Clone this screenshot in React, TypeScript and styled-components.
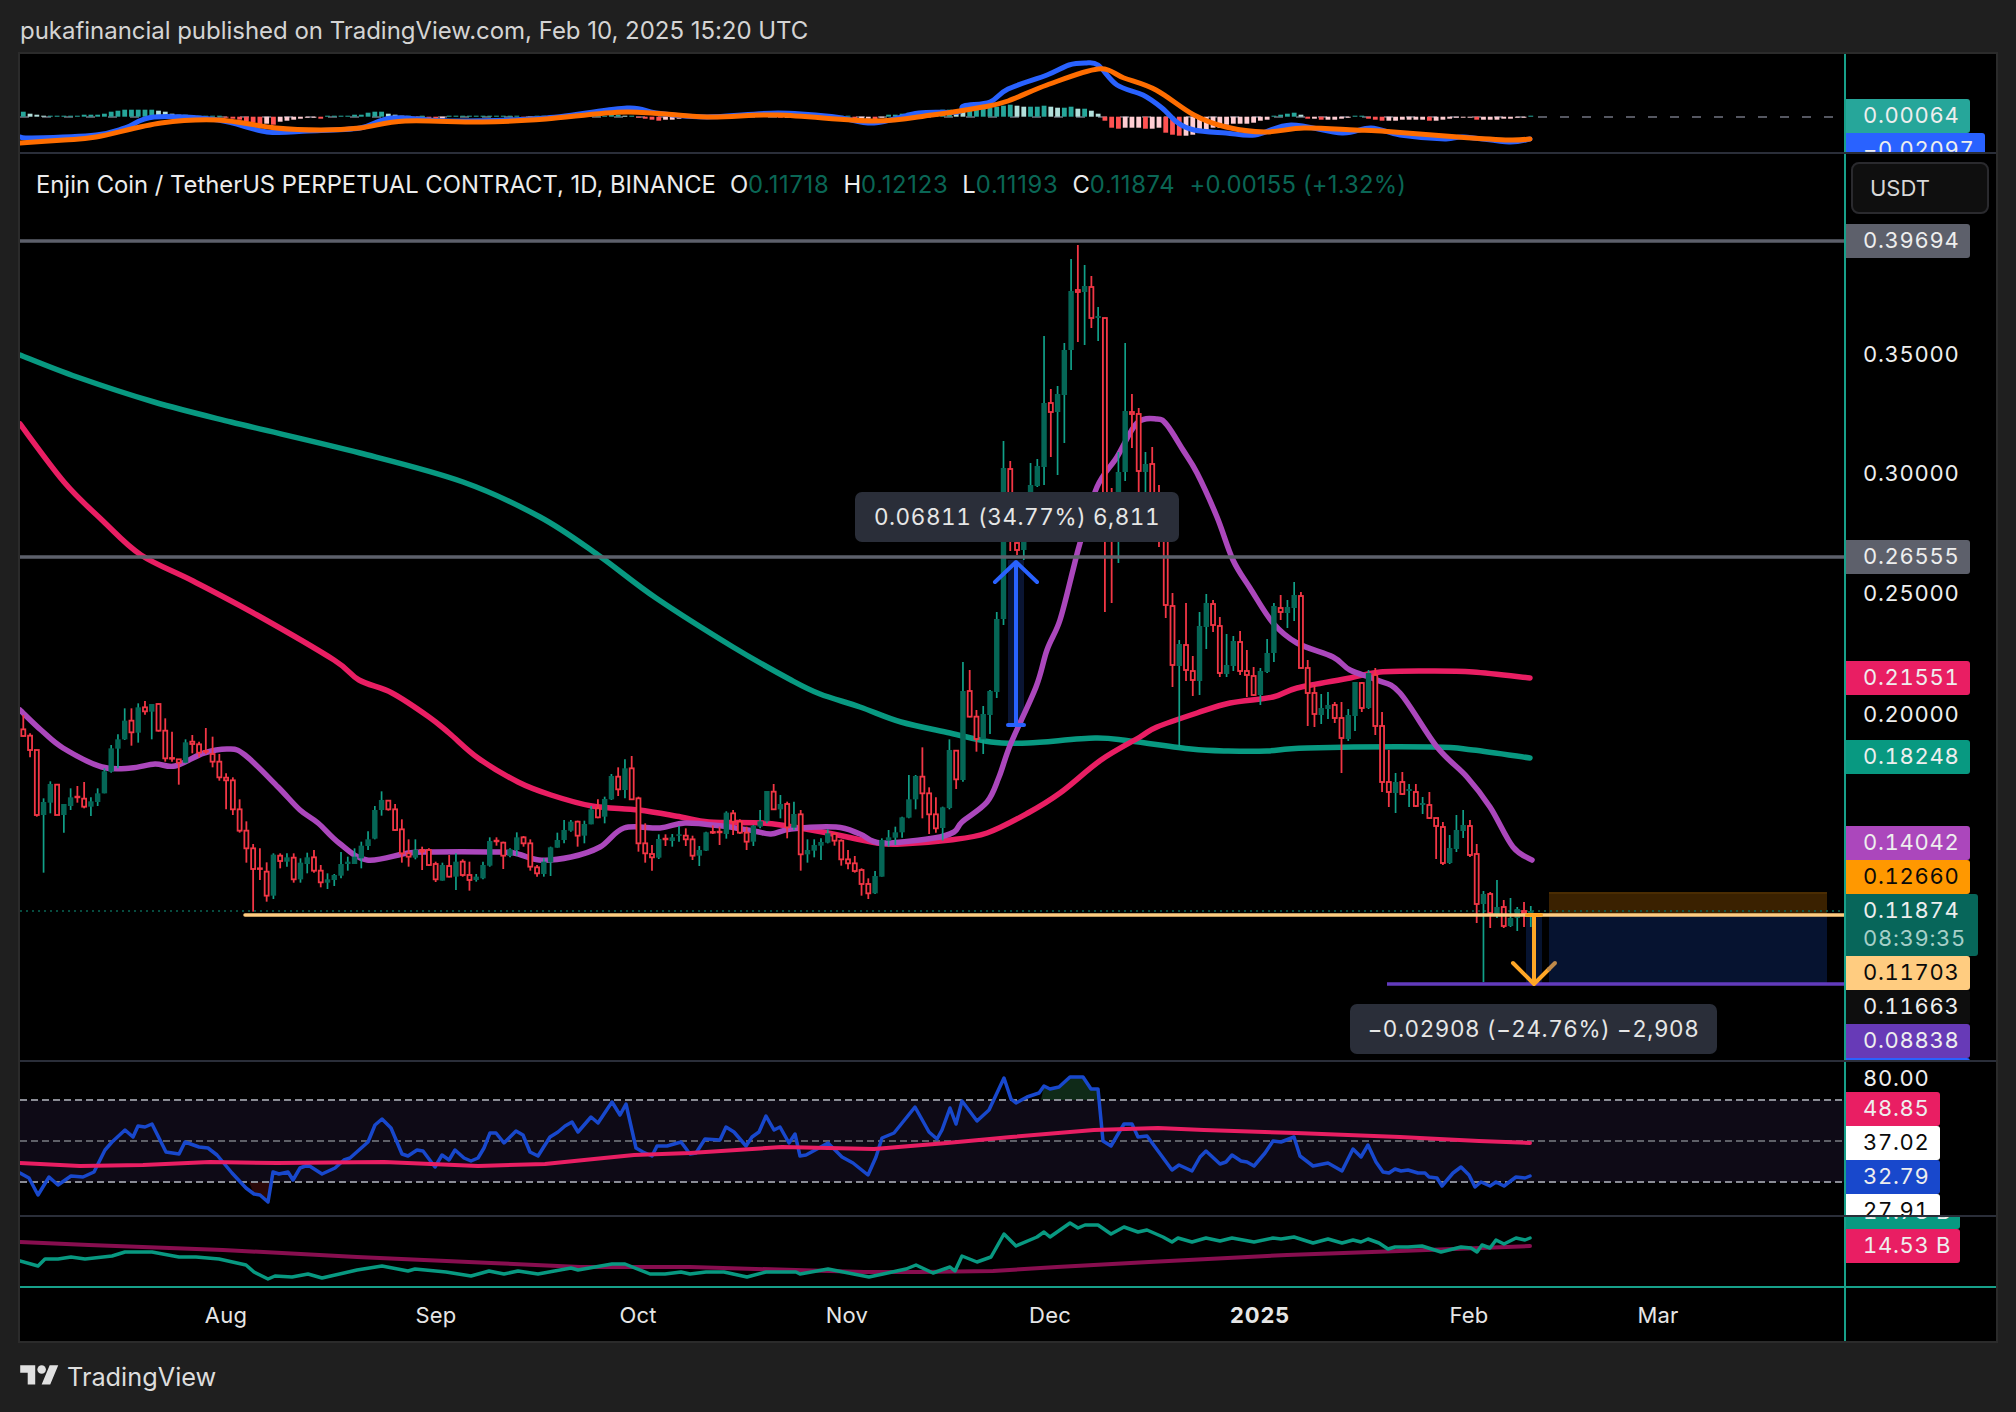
import React from 'react';
import styled, { createGlobalStyle } from 'styled-components';

const GlobalStyle = createGlobalStyle`
  html, body {
    margin: 0;
    padding: 0;
    background: #1f1f1f;
    font-family: Inter, "Liberation Sans", sans-serif;
  }
`;

const Page = styled.div`
  width: 2016px;
  height: 1412px;
  overflow: hidden;
  background: #1f1f1f;
`;

const Header = styled.div`
  height: 52px;
  padding-left: 20px;
  padding-top: 16px;
  box-sizing: border-box;
  color: #d4d4d4;
  font-size: 24px;
  line-height: 30px;
  letter-spacing: -0.03px;
`;

const ChartFrame = styled.div`
  width: 1976px;
  margin-left: 18px;
  border: 2px solid #2b2b2b;
  background: #000;
`;

const Pane = styled.div<{ $h: number; $line?: boolean }>`
  display: grid;
  grid-template-columns: 1824px 152px;
  grid-template-rows: ${(p) => p.$h}px;
  height: ${(p) => p.$h}px;
  border-bottom: ${(p) => (p.$line ? '2px solid #2a2e39' : 'none')};
  position: relative;
  overflow: hidden;
`;

const Plot = styled.svg`
  display: block;
  width: 1824px;
  height: 100%;
`;

const Axis = styled.div`
  position: relative;
  display: flex;
  flex-direction: column;
  border-left: 2px solid #17a08a;
  overflow: hidden;
`;

const PriceStack = styled.div<{ $offset: number }>`
  display: flex;
  flex-direction: column;
  flex-shrink: 0;
  margin-top: ${(p) => p.$offset}px;
`;

const PriceTag = styled.div<{ $bg?: string; $fg?: string; $w?: number; $h?: number }>`
  flex-shrink: 0;
  width: ${(p) => p.$w ?? 124}px;
  height: ${(p) => p.$h ?? 34}px;
  box-sizing: border-box;
  padding-left: 17px;
  border-radius: 0 3px 3px 0;
  background: ${(p) => p.$bg ?? 'transparent'};
  color: ${(p) => p.$fg ?? '#eeeeee'};
  font-size: 22px;
  line-height: 32px;
  letter-spacing: 0.7px;
  font-variant-numeric: tabular-nums;
  white-space: nowrap;
`;

// a level on the price scale, pinned at the height of its price
const ScaleTag = styled(PriceTag)<{ $top: number }>`
  position: absolute;
  left: 0;
  top: ${(p) => p.$top}px;
`;

const CountDown = styled.div`
  color: #a6cfc8;
  margin-top: -4px;
`;

const CurrencyButton = styled.div`
  flex-shrink: 0;
  width: 138px;
  height: 52px;
  margin: 8px 0 0 5px;
  box-sizing: border-box;
  padding-left: 17px;
  background: #0f0f0f;
  border: 2px solid #2a2a2e;
  border-radius: 8px;
  color: #d8d8d8;
  font-size: 22px;
  line-height: 48px;
`;

const Legend = styled.div`
  position: absolute;
  left: 16px;
  top: 16px;
  display: flex;
  gap: 14px;
  color: #ececec;
  font-size: 23.8px;
  line-height: 30px;
  white-space: nowrap;
`;

const LegendValue = styled.span`
  color: #0a6655;
  letter-spacing: 0.7px;
`;

const LegendChange = styled.span`
  color: #0a6655;
  letter-spacing: 0.2px;
`;

const Measure = styled.div<{ $left: number; $top: number; $w: number }>`
  position: absolute;
  left: ${(p) => p.$left}px;
  top: ${(p) => p.$top}px;
  width: ${(p) => p.$w}px;
  height: 50px;
  background: #2a2e39;
  border-radius: 7px;
  color: #e6e6e6;
  font-size: 22.5px;
  font-variant-numeric: tabular-nums;
  letter-spacing: 0.55px;
  line-height: 50px;
  text-align: center;
  white-space: nowrap;
`;

const TimeRow = styled.div`
  display: grid;
  grid-template-columns: 1824px 152px;
  height: 53px;
  border-top: 2px solid #17a08a;
`;

const TimeScale = styled.div`
  display: flex;
  align-items: center;
  padding-left: 101px;
`;

const TimeTick = styled.span<{ $w: number; $bold?: boolean }>`
  width: ${(p) => p.$w}px;
  text-align: center;
  color: #e6e6e6;
  font-size: 22px;
  line-height: 30px;
  font-weight: ${(p) => (p.$bold ? 700 : 400)};
  letter-spacing: ${(p) => (p.$bold ? '0.8px' : '0.2px')};
`;

const Footer = styled.div`
  display: flex;
  align-items: center;
  gap: 8px;
  height: 40px;
  margin-top: 13px;
  padding-left: 20px;
  color: #dddddd;
  font-size: 25.3px;
`;

// green?, body top, body bottom, wick top, wick bottom
type Candle = [number, number, number, number, number];

// read from the chart at 3 units per px, measured down from y=680
const firstHalf: Candle[] = [
  [0, 148, 168, 105, 170], [0, 167, 210, 160, 232], [0, 210, 405, 210, 410], [1, 366, 405, 355, 578],
  [1, 312, 368, 304, 400], [0, 314, 405, 314, 405], [1, 372, 405, 372, 458], [1, 352, 378, 325, 390],
  [0, 350, 352, 318, 368], [0, 356, 380, 306, 385], [1, 364, 380, 352, 408], [1, 340, 366, 325, 378],
  [1, 274, 340, 265, 340], [1, 205, 275, 195, 278], [1, 178, 206, 163, 265], [1, 122, 178, 85, 180],
  [0, 122, 157, 85, 197], [1, 82, 158, 70, 188], [0, 82, 94, 63, 104], [1, 72, 95, 72, 178],
  [0, 72, 152, 70, 155], [0, 152, 235, 115, 245], [0, 234, 236, 155, 245], [0, 238, 248, 238, 314],
  [1, 187, 248, 178, 250], [0, 185, 192, 165, 220], [0, 193, 218, 185, 232], [0, 213, 215, 144, 222],
  [0, 222, 245, 170, 262], [0, 245, 292, 222, 302], [0, 293, 301, 280, 388], [0, 301, 388, 292, 405],
  [0, 388, 452, 358, 458], [0, 452, 505, 424, 548], [0, 505, 567, 492, 695], [0, 565, 567, 505, 600],
  [0, 575, 647, 547, 665], [1, 524, 647, 520, 657], [0, 527, 543, 520, 565], [1, 532, 545, 520, 560],
  [0, 533, 598, 520, 608], [1, 548, 598, 535, 608], [1, 532, 552, 518, 580], [0, 532, 572, 510, 578],
  [0, 572, 607, 555, 622], [1, 598, 608, 580, 627], [1, 585, 600, 582, 618], [1, 552, 587, 516, 595],
  [1, 545, 552, 530, 572], [1, 530, 552, 505, 552], [1, 497, 535, 485, 565], [1, 478, 498, 454, 510],
  [1, 390, 476, 378, 478], [1, 360, 390, 334, 407], [0, 362, 388, 360, 392], [0, 388, 450, 372, 452],
  [0, 448, 520, 418, 548], [0, 520, 530, 478, 560], [1, 510, 533, 478, 538], [0, 510, 515, 500, 570],
  [0, 510, 555, 505, 558], [0, 552, 598, 545, 606], [1, 555, 602, 548, 602], [0, 558, 590, 525, 592],
  [1, 545, 590, 520, 630], [0, 545, 585, 538, 590], [0, 585, 600, 545, 632], [1, 590, 600, 582, 605],
  [1, 555, 595, 545, 598], [1, 483, 557, 472, 560], [0, 482, 484, 472, 497], [0, 488, 527, 485, 567],
  [1, 508, 528, 505, 532], [1, 472, 510, 457, 527], [0, 472, 490, 468, 500], [0, 490, 560, 478, 572],
  [0, 562, 580, 555, 590], [1, 545, 582, 535, 590], [1, 502, 547, 500, 588], [1, 480, 503, 458, 503],
  [1, 450, 480, 420, 490], [1, 425, 452, 420, 455], [0, 425, 467, 422, 500], [1, 432, 467, 422, 490],
  [1, 388, 433, 378, 433], [0, 385, 412, 358, 415], [1, 357, 410, 350, 430], [1, 288, 358, 282, 360],
  [0, 290, 328, 262, 348], [1, 265, 330, 238, 355], [0, 265, 358, 228, 360], [0, 355, 490, 350, 515],
  [0, 490, 520, 430, 548], [0, 522, 532, 495, 572], [1, 477, 533, 463, 537], [0, 476, 478, 463, 498],
  [1, 472, 483, 462, 500], [1, 463, 466, 438, 485], [0, 467, 478, 445, 498], [0, 478, 527, 467, 540],
  [1, 510, 527, 498, 558], [1, 457, 512, 455, 513], [0, 456, 458, 436, 462], [0, 455, 457, 440, 495],
  [1, 398, 462, 394, 476], [0, 400, 425, 390, 465], [0, 425, 458, 418, 462], [0, 458, 485, 440, 510],
  [1, 437, 485, 435, 498], [1, 424, 440, 390, 445], [1, 333, 424, 333, 430], [0, 335, 388, 312, 390],
  [1, 372, 388, 345, 415], [0, 372, 442, 365, 475], [1, 402, 443, 365, 450], [0, 403, 523, 390, 572],
  [1, 510, 523, 478, 548], [1, 495, 512, 478, 532], [1, 486, 497, 475, 540], [1, 460, 488, 448, 490],
  [0, 462, 482, 458, 497], [0, 482, 538, 478, 557], [0, 538, 550, 510, 568], [0, 550, 573, 528, 578],
  [0, 570, 612, 565, 647], [0, 612, 640, 595, 657], [1, 588, 640, 573, 642], [1, 480, 590, 475, 590],
  [1, 472, 482, 450, 500], [1, 457, 473, 440, 495], [1, 412, 457, 410, 473], [1, 358, 413, 285, 415],
  [1, 288, 358, 285, 388], [0, 290, 340, 202, 415], [0, 340, 403, 322, 462], [0, 403, 445, 352, 458],
  [1, 382, 444, 380, 482], [1, 210, 384, 178, 388], [0, 212, 298, 212, 327], [1, 33, 300, -54, 305],
  [0, 33, 110, -30, 112], [0, 110, 177, 90, 215], [1, 102, 178, 78, 222], [1, 33, 105, 30, 162],
];

// same order, plain page px
const secondHalf: Candle[] = [
  [1, 619, 692, 612, 698], [1, 468, 619, 441, 625], [0, 469, 540, 461, 551], [0, 543, 550, 520, 555],
  [1, 515, 550, 505, 560], [1, 485, 515, 463, 520], [1, 466, 486, 459, 487], [1, 403, 467, 336, 485],
  [0, 403, 412, 389, 457], [1, 394, 412, 386, 475], [1, 350, 395, 343, 443], [1, 291, 350, 259, 370],
  [0, 290, 292, 245, 342], [1, 286, 292, 265, 345], [0, 287, 318, 276, 328], [1, 316, 318, 307, 341],
  [0, 318, 517, 318, 612], [0, 500, 530, 488, 603], [1, 472, 495, 452, 563], [1, 411, 472, 343, 481],
  [0, 412, 414, 394, 448], [0, 414, 471, 408, 493], [1, 464, 472, 452, 493], [0, 464, 497, 447, 497],
  [0, 497, 540, 485, 547], [0, 540, 605, 530, 618], [0, 606, 665, 593, 687], [1, 644, 666, 640, 747],
  [0, 645, 670, 603, 681], [0, 671, 680, 656, 696], [1, 626, 681, 612, 695], [1, 603, 627, 594, 649],
  [0, 604, 625, 600, 632], [0, 626, 673, 617, 677], [1, 665, 674, 634, 677], [1, 641, 666, 636, 671],
  [0, 642, 671, 631, 675], [0, 671, 675, 650, 697], [0, 676, 695, 667, 696], [1, 671, 695, 668, 705],
  [1, 653, 672, 639, 673], [1, 606, 653, 603, 662], [0, 608, 612, 595, 620], [1, 607, 613, 600, 628],
  [1, 595, 608, 582, 621], [0, 596, 668, 592, 668], [0, 668, 693, 660, 726], [0, 693, 714, 685, 727],
  [1, 708, 715, 694, 724], [1, 705, 709, 692, 719], [0, 705, 718, 702, 723], [0, 718, 738, 702, 773],
  [1, 715, 739, 709, 741], [1, 682, 716, 682, 731], [0, 683, 708, 682, 712], [1, 673, 708, 670, 709],
  [0, 675, 726, 668, 735], [0, 726, 782, 712, 792], [0, 782, 792, 750, 807], [1, 782, 793, 773, 813],
  [0, 782, 794, 772, 795], [1, 789, 791, 784, 807], [0, 792, 806, 784, 807], [1, 803, 805, 797, 814],
  [0, 805, 818, 792, 819], [0, 818, 826, 818, 859], [0, 827, 863, 822, 865], [1, 848, 863, 835, 864],
  [1, 830, 849, 815, 852], [1, 825, 831, 810, 838], [0, 826, 855, 820, 857], [0, 854, 904, 844, 923],
  [1, 894, 904, 891, 982], [0, 894, 913, 892, 928], [1, 907, 914, 880, 918], [0, 907, 926, 900, 928],
  [1, 918, 926, 898, 927], [1, 909, 918, 907, 931], [0, 911, 913, 902, 927], [1, 911, 913, 906, 927],
];

const candles: Candle[] = [
  ...firstHalf.map(([g, a, b, c, d]): Candle => [g, 680 + a / 3, 680 + b / 3, 680 + c / 3, 680 + d / 3]),
  ...secondHalf,
];

const barX = (i: number) => 23.3 + 6.76 * i;

const macdBars = [
  5, 3, 2, 1, 1, 1, 1, 1, 1, 2, 2, 2, 3, 5, 6, 7, 7, 7, 7, 7, 6, 5, 3, 2, 2, 1, 1, 1, 1, 1,
  -1, -2, -3, -5, -6, -8, -7, -8, -5, -4, -3, -2, -1, -1, -2, 1, 1, 1, 1, 2, 2, 4, 5, 5, 3, 2,
  1, 1, -1, 1, -2, -3, -2, 1, 1, 1, 1, 1, 1, 1, 1, 1, 1, 1, -1, -1, 1, 1, 1, 1, 2, 1, 1, 1, 1, 1,
  1, 2, 2, 1, 1, -1, -2, -3, -4, -3, -3, -2, -1, 1, 1, 1, 1, 1, -1, 1, 1, 1, 1, 1, 1, 1, -1, -1, -1, -1,
  1, 1, 1, 1, 1, 1, 1, -2, -2, -2, -3, -1, 2, 2, 3, 4, 4, 5, 5, 6, 7, 7, 6, 5, 6, 7, 8, 9, 10,
  11, 12, 11, 10, 10, 10, 11, 10, 9, 9, 10, 8, 8, 6, 3,
  -4, -11, -12, -11, -11, -11, -12, -12, -11, -16, -18, -19, -19, -18, -15, -13, -11, -11, -8, -7, -7, -7, -6, -4, -3,
  1, 2, 3, 4, 2,
  -2, -2, -3, -3, -3, -2, -1, 1, 1, -2, -3, -4, -4, -4, -3, -3, -3, -3, -4, -4, -3, -2, -1, -1, -1, -3, -3, -3, -3, -2, -2, -1, -1, 1,
];

const barColor = (v: number, prev: number) => {
  if (v >= 0) return v >= prev ? '#26a69a' : '#b2dfdb';
  return v < prev ? '#ff5252' : '#ffcdd2';
};

const macdBlue =
  '20,137 32,138 96,135 125,128 154,117 218,120 267,132 308,131 360,128 392,118 450,121 546,118 627,108 656,113 707,117 778,113 835,117 874,123 919,113 958,112 964,106 990,102 1008,89 1047,75 1069,65 1085,63 1098,65 1117,85 1143,95 1162,108 1178,123 1194,130 1226,133 1255,135 1291,125 1342,133 1371,128 1400,135 1445,139 1464,137 1509,142 1530,139';
const macdOrange =
  '20,143 64,140 96,137 161,123 218,120 276,128 321,130 360,128 405,121 482,122 546,119 627,112 707,117 778,115 874,121 932,115 983,107 1008,101 1047,85 1098,69 1124,78 1156,90 1194,115 1226,127 1265,132 1304,128 1355,130 1381,131 1458,137 1509,140 1530,139';

const ema200 =
  '20,355 77,377 154,402 231,422 360,453 463,482 540,517 598,555 656,598 733,647 791,680 820,694 860,707 901,722 950,733 991,742 1028,743 1095,738 1130,741 1191,749 1228,751 1267,751 1307,748 1433,747 1473,750 1530,758';
const ema100 =
  '20,424 64,482 103,521 141,555 193,581 257,615 334,660 359,680 392,693 429,717 449,733 478,758 518,782 551,795 592,806 639,810 681,817 709,822 762,823 787,826 828,833 877,843 901,844 950,840 987,833 1028,813 1060,793 1101,760 1140,737 1157,727 1197,713 1230,703 1273,697 1297,688 1350,678 1380,672 1427,671 1473,672 1530,678';
const ema20 =
  '20,710 41,730 63,748 102,767 131,768 155,764 175,766 204,753 229,749 245,755 278,787 300,810 318,823 339,843 367,860 408,853 433,852 490,852 514,853 539,860 571,857 600,847 624,828 660,828 685,823 722,826 754,831 771,834 791,829 836,827 860,834 881,843 934,838 954,832 962,822 987,802 999,777 1011,743 1036,687 1047,650 1060,620 1073,570 1080,543 1097,487 1117,457 1137,423 1157,419 1167,425 1183,450 1197,473 1217,517 1233,560 1250,588 1273,623 1297,643 1333,657 1350,670 1377,680 1400,693 1437,747 1467,777 1490,807 1513,847 1532,860';

const rsiLine =
  '20,1173 29,1178 38,1195 49,1177 58,1185 71,1176 83,1177 94,1172 105,1150 112,1142 125,1130 133,1137 138,1126 145,1127 152,1124 161,1142 166,1152 179,1154 185,1142 199,1147 208,1148 217,1155 232,1173 246,1188 254,1194 260,1195 268,1202 273,1172 279,1174 288,1172 293,1180 300,1168 308,1165 322,1174 335,1168 344,1160 350,1158 368,1142 375,1125 382,1119 391,1128 402,1154 408,1156 417,1150 423,1151 435,1167 442,1155 449,1160 455,1150 464,1158 471,1161 478,1158 484,1148 490,1133 496,1133 504,1143 516,1131 523,1135 530,1152 538,1156 550,1137 558,1132 565,1126 572,1122 578,1132 591,1117 598,1123 612,1102 620,1115 626,1104 636,1148 643,1152 652,1156 657,1146 667,1146 681,1142 690,1154 696,1153 705,1139 720,1140 726,1127 734,1132 746,1146 752,1137 759,1132 766,1116 774,1130 780,1127 789,1143 795,1134 800,1156 806,1155 828,1143 842,1157 853,1163 868,1175 876,1157 882,1138 894,1133 915,1107 929,1132 937,1139 942,1130 950,1108 956,1124 962,1101 977,1121 989,1110 1004,1078 1011,1099 1016,1103 1027,1097 1039,1093 1044,1086 1050,1089 1059,1087 1070,1077 1083,1077 1091,1089 1098,1089 1103,1141 1111,1146 1124,1124 1132,1124 1138,1137 1147,1136 1172,1170 1179,1165 1192,1171 1200,1157 1206,1151 1220,1164 1226,1162 1232,1155 1241,1161 1247,1162 1254,1166 1265,1153 1273,1141 1281,1142 1294,1137 1300,1156 1313,1166 1328,1163 1342,1171 1353,1149 1361,1157 1368,1145 1376,1162 1383,1172 1389,1173 1395,1169 1401,1171 1408,1170 1418,1173 1425,1173 1429,1177 1437,1178 1442,1186 1453,1173 1461,1167 1469,1175 1475,1187 1481,1182 1490,1186 1496,1182 1504,1186 1516,1177 1525,1178 1530,1176';
const rsiAverage =
  '20,1163 80,1166 143,1165 210,1162 277,1163 384,1162 478,1166 545,1164 594,1159 634,1155 690,1153 782,1147 874,1149 947,1143 1011,1137 1094,1130 1158,1128 1204,1130 1296,1133 1400,1137 1479,1141 1530,1143';

const flowLine =
  '20,1261 38,1266 45,1259 58,1259 71,1257 85,1259 112,1256 125,1252 152,1252 179,1257 196,1257 219,1259 246,1265 254,1272 268,1279 275,1276 292,1277 308,1274 322,1278 357,1270 382,1266 408,1271 415,1269 446,1272 471,1276 489,1271 504,1274 518,1271 538,1274 571,1268 578,1270 612,1264 625,1264 650,1274 665,1274 681,1272 690,1274 706,1272 724,1272 747,1277 766,1272 796,1272 800,1274 828,1269 869,1277 906,1269 916,1265 933,1273 950,1267 955,1271 962,1256 977,1262 991,1257 1004,1234 1016,1246 1037,1237 1044,1232 1050,1237 1070,1223 1078,1228 1085,1225 1098,1225 1111,1234 1124,1227 1138,1232 1147,1230 1163,1237 1172,1242 1178,1238 1192,1242 1206,1238 1220,1241 1232,1238 1254,1242 1273,1238 1281,1239 1294,1237 1313,1243 1328,1239 1342,1243 1353,1240 1361,1242 1368,1239 1379,1243 1388,1249 1395,1247 1408,1247 1422,1246 1441,1252 1461,1247 1471,1248 1477,1252 1482,1245 1490,1248 1496,1240 1504,1244 1516,1238 1525,1240 1530,1238';
const flowAverage =
  '20,1242 89,1245 223,1250 357,1257 491,1263 580,1267 690,1267 864,1272 920,1272 993,1271 1057,1267 1149,1262 1287,1255 1400,1251 1530,1246';

// catmull-rom through the points, for the moving averages
const smoothPath = (points: string) => {
  const p = points.split(' ').map((s) => s.split(',').map(Number));
  let d = `M${p[0][0]} ${p[0][1]}`;
  for (let i = 0; i < p.length - 1; i++) {
    const a = p[Math.max(i - 1, 0)];
    const b = p[i];
    const c = p[i + 1];
    const e = p[Math.min(i + 2, p.length - 1)];
    const c1x = b[0] + (c[0] - a[0]) / 6;
    const c1y = b[1] + (c[1] - a[1]) / 6;
    const c2x = c[0] - (e[0] - b[0]) / 6;
    const c2y = c[1] - (e[1] - b[1]) / 6;
    d += ` C${c1x.toFixed(1)} ${c1y.toFixed(1)} ${c2x.toFixed(1)} ${c2y.toFixed(1)} ${c[0]} ${c[1]}`;
  }
  return d;
};

const Trace: React.FC<{ points: string; color: string; width: number }> = ({ points, color, width }) => (
  <polyline points={points} fill="none" stroke={color} strokeWidth={width} strokeLinejoin="round" strokeLinecap="round" />
);

const Curve: React.FC<{ points: string; color: string; width: number }> = ({ points, color, width }) => (
  <path d={smoothPath(points)} fill="none" stroke={color} strokeWidth={width} strokeLinejoin="round" strokeLinecap="round" />
);

const MainDrawing: React.FC = () => (
  <Plot viewBox="20 154 1824 906" preserveAspectRatio="none">
    <rect x={1549} y={892} width={278} height={23} fill="#3a2100" />
    <rect x={1549} y={892} width={278} height={2} fill="#4a2c02" />
    <rect x={1549} y={915} width={278} height={69} fill="#061330" />
    <rect x={1008} y={560} width={16} height={165} fill="#0a1533" />
    <rect x={1526} y={915} width={16} height={69} fill="#061330" />
    <Curve points={ema200} color="#089981" width={5.5} />
    <Curve points={ema100} color="#e91e63" width={5.5} />
    <Curve points={ema20} color="#ab47bc" width={5.5} />
    <line x1={20} x2={1844} y1={911} y2={911} stroke="#0a6655" strokeWidth={1.5} strokeDasharray="2 4" />
    {candles.map(([green, top, bottom, high, low], i) => {
      const x = barX(i);
      return green ? (
        <g key={i}>
          <line x1={x} x2={x} y1={high} y2={low} stroke="#11a088" strokeWidth={1.7} />
          <rect x={x - 2.7} y={top} width={5.4} height={Math.max(bottom - top, 1.5)} fill="#056656" />
        </g>
      ) : (
        <g key={i}>
          <line x1={x} x2={x} y1={high} y2={low} stroke="#f23645" strokeWidth={1.8} />
          <rect x={x - 2} y={top} width={4} height={Math.max(bottom - top, 0.5)} fill="#000" stroke="#f23645" strokeWidth={1.8} />
        </g>
      );
    })}
    <line x1={20} x2={1844} y1={241} y2={241} stroke="#5d606b" strokeWidth={3.5} />
    <line x1={20} x2={1844} y1={557} y2={557} stroke="#5d606b" strokeWidth={3.5} />
    <line x1={245} x2={1844} y1={915} y2={915} stroke="#ffcc80" strokeWidth={3.5} strokeLinecap="round" />
    <line x1={1387} x2={1844} y1={984} y2={984} stroke="#623bbd" strokeWidth={3.5} />
    <line x1={1016} x2={1016} y1={562} y2={725} stroke="#2962ff" strokeWidth={4} />
    <polyline points="995,582 1016,562 1037,582" fill="none" stroke="#2962ff" strokeWidth={4} strokeLinecap="round" strokeLinejoin="round" />
    <line x1={1008} x2={1024} y1={725} y2={725} stroke="#2962ff" strokeWidth={4} strokeLinecap="round" />
    <line x1={1527} x2={1541} y1={915} y2={915} stroke="#ffa726" strokeWidth={4} strokeLinecap="round" />
    <line x1={1534} x2={1534} y1={915} y2={982} stroke="#ffa726" strokeWidth={4} />
    <polyline points="1513,963 1534,984 1549,969" fill="none" stroke="#ffa726" strokeWidth={4} strokeLinecap="round" strokeLinejoin="round" />
    <line x1={1549} x2={1555} y1={969} y2={963} stroke="#c08a4a" strokeWidth={4} strokeLinecap="round" />
  </Plot>
);

const App: React.FC = () => (
  <Page>
    <GlobalStyle />
    <Header>pukafinancial published on TradingView.com, Feb 10, 2025 15:20 UTC</Header>
    <ChartFrame>
      <Pane $h={98} $line>
        <Plot viewBox="20 54 1824 98" preserveAspectRatio="none">
          <line x1={20} x2={1844} y1={117} y2={117} stroke="#555761" strokeWidth={2} strokeDasharray="9 13" />
          {macdBars.map((v, i) => (
            <rect
              key={i}
              x={barX(i) - 2.4}
              y={v >= 0 ? 116.7 - v : 116.7}
              width={4.8}
              height={Math.abs(v)}
              fill={barColor(v, i ? macdBars[i - 1] : 0)}
            />
          ))}
          <Curve points={macdBlue} color="#2962ff" width={5} />
          <Curve points={macdOrange} color="#ff6d00" width={5} />
        </Plot>
        <Axis>
          <PriceStack $offset={45}>
            <PriceTag $bg="#26a69a">0.00064</PriceTag>
            <PriceTag $bg="#2962ff" $w={139}>−0.02097</PriceTag>
          </PriceStack>
        </Axis>
      </Pane>

      <Pane $h={906} $line>
        <MainDrawing />
        <Axis>
          <CurrencyButton>USDT</CurrencyButton>
          <ScaleTag $top={70} $bg="#5d606b">0.39694</ScaleTag>
          <ScaleTag $top={184}>0.35000</ScaleTag>
          <ScaleTag $top={303}>0.30000</ScaleTag>
          <ScaleTag $top={386} $bg="#5d606b">0.26555</ScaleTag>
          <ScaleTag $top={423}>0.25000</ScaleTag>
          <ScaleTag $top={507} $bg="#e91e63">0.21551</ScaleTag>
          <ScaleTag $top={544}>0.20000</ScaleTag>
          <ScaleTag $top={586} $bg="#089981">0.18248</ScaleTag>
          <PriceStack $offset={612}>
            <PriceTag $bg="#ab47bc">0.14042</PriceTag>
            <PriceTag $bg="#ff9800" $fg="#0a0a0a">0.12660</PriceTag>
            <PriceTag $bg="#07665a" $w={132} $h={62}>
              0.11874
              <CountDown>08:39:35</CountDown>
            </PriceTag>
            <PriceTag $bg="#ffcc80" $fg="#0a0a0a">0.11703</PriceTag>
            <PriceTag $bg="#0e0e0e">0.11663</PriceTag>
            <PriceTag $bg="#673ab7">0.08838</PriceTag>
            <PriceTag $bg="#2962ff" />
          </PriceStack>
        </Axis>
        <Legend>
          <span>Enjin Coin / TetherUS PERPETUAL CONTRACT, 1D, BINANCE</span>
          <span>O<LegendValue>0.11718</LegendValue></span>
          <span>H<LegendValue>0.12123</LegendValue></span>
          <span>L<LegendValue>0.11193</LegendValue></span>
          <span>C<LegendValue>0.11874</LegendValue></span>
          <LegendChange>+0.00155 (+1.32%)</LegendChange>
        </Legend>
        <Measure $left={835} $top={338} $w={324}>0.06811 (34.77%) 6,811</Measure>
        <Measure $left={1330} $top={850} $w={367}>−0.02908 (−24.76%) −2,908</Measure>
      </Pane>

      <Pane $h={153} $line>
        <Plot viewBox="20 1062 1824 153" preserveAspectRatio="none">
          <rect x={20} y={1100} width={1824} height={82} fill="#0e0a16" />
          <polygon points="1041,1100 1044,1086 1050,1089 1059,1087 1070,1077 1083,1077 1091,1089 1098,1089 1100,1100" fill="#0f2a18" />
          <polygon points="249,1182 254,1194 260,1195 268,1202 271,1182" fill="#2a0808" />
          {[1100, 1141, 1182].map((y) => (
            <line key={y} x1={20} x2={1844} y1={y} y2={y} stroke={y === 1141 ? '#5f6068' : '#8a8c95'} strokeWidth={2} strokeDasharray="7 4" />
          ))}
          <Trace points={rsiLine} color="#1848cc" width={3.5} />
          <Trace points={rsiAverage} color="#e91e63" width={4} />
        </Plot>
        <Axis>
          <PriceStack $offset={0}>
            <PriceTag $h={30}>80.00</PriceTag>
            <PriceTag $bg="#e91e63" $w={94}>48.85</PriceTag>
            <PriceTag $bg="#ffffff" $fg="#0a0a0a" $w={94}>37.02</PriceTag>
            <PriceTag $bg="#1848cc" $w={94}>32.79</PriceTag>
            <PriceTag $bg="#ffffff" $fg="#0a0a0a" $w={94}>27.91</PriceTag>
          </PriceStack>
        </Axis>
      </Pane>

      <Pane $h={69}>
        <Plot viewBox="20 1217 1824 69" preserveAspectRatio="none">
          <Trace points={flowAverage} color="#880e4f" width={4} />
          <Trace points={flowLine} color="#089981" width={3.5} />
        </Plot>
        <Axis>
          <PriceStack $offset={-22}>
            <PriceTag $bg="#089981" $w={114}>14.78 B</PriceTag>
            <PriceTag $bg="#e91e63" $w={114}>14.53 B</PriceTag>
          </PriceStack>
        </Axis>
      </Pane>

      <TimeRow>
        <TimeScale>
          <TimeTick $w={210}>Aug</TimeTick>
          <TimeTick $w={210}>Sep</TimeTick>
          <TimeTick $w={194}>Oct</TimeTick>
          <TimeTick $w={224}>Nov</TimeTick>
          <TimeTick $w={182}>Dec</TimeTick>
          <TimeTick $w={238} $bold>2025</TimeTick>
          <TimeTick $w={180}>Feb</TimeTick>
          <TimeTick $w={198}>Mar</TimeTick>
        </TimeScale>
        <Axis />
      </TimeRow>
    </ChartFrame>
    <Footer>
      <svg width="39" height="30" viewBox="0 0 36 28" fill="#e0e0e0">
        <path d="M14 22H7V11H0V4h14v18zM28 22h-8l7.5-18h8L28 22z" />
        <circle cx="20" cy="8" r="4" />
      </svg>
      <span>TradingView</span>
    </Footer>
  </Page>
);

export default App;
